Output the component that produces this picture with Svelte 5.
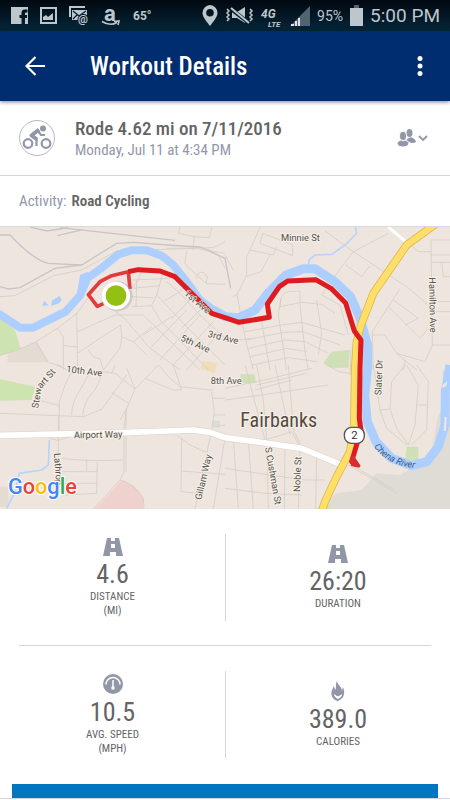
<script lang="ts">
  const stats = [
    [
      { icon: 'road', value: '4.6', label: 'DISTANCE', unit: '(MI)' },
      { icon: 'road', value: '26:20', label: 'DURATION', unit: '' },
    ],
    [
      { icon: 'gauge', value: '10.5', label: 'AVG. SPEED', unit: '(MPH)' },
      { icon: 'flame', value: '389.0', label: 'CALORIES', unit: '' },
    ],
  ];

  // map streets, split by the quarter of the map they are in
  const streetsNW = [
    'M0 215L45 212L160 152L245 135L350 78L585 70L675 85', 'M500 70L640 68L675 50', 'M620 70L655 90L675 130',
    'M540 5L536 25L582 35L580 76', 'M582 35L628 38L636 8', 'M560 77L554 115L595 155L620 176L675 178',
    'M588 160Q600 125 622 155L618 175', 'M0 390Q50 380 108 350L172 310L230 266L300 170',
    'M108 350L145 412L185 424', 'M172 310L190 335L190 435', 'M190 362L232 366', 'M230 266L233 430',
    'M233 320L345 270L430 270', 'M233 384L300 340L362 300', 'M264 374L280 395L300 402L310 435',
    'M345 258L375 282L450 370L540 435', 'M362 300L365 335L400 350L440 390', 'M365 335L360 370L310 435',
    'M395 190L412 170L425 140', 'M395 215L460 218', 'M395 190L480 182', 'M395 165L510 160', 'M395 245L455 242L470 210L490 140',
    'M410 165L408 245', 'M455 242L480 285L625 435', 'M430 270L600 435', 'M470 210L555 300L675 420',
    'M490 230L540 200L560 175', 'M515 280L590 205', 'M545 310L620 235', 'M430 330L515 275', 'M450 370L560 255',
    'M400 350L455 305', 'M480 405L600 270', 'M515 425L640 290', 'M560 435L660 320', 'M500 170L540 205L600 270L675 340',
  ];
  const streetsNE = [
    'M108 0L75 75L65 95', 'M113 25L105 55L203 92L203 60L113 25', 'M75 75L145 90L155 65', 'M65 95L65 150L36 210L62 345L85 435',
    'M65 155L108 140L135 90', 'M0 90L25 135', 'M25 215L40 205', 'M300 18L385 80L350 125L290 210',
    'M385 80L545 185L610 240', 'M385 80L490 25', 'M360 118L410 155L435 122', 'M545 50L580 80L618 80',
    'M618 45L675 45M618 45L622 360L675 360M618 90L675 90M618 112L675 112M650 112L655 155L675 155M625 230L675 230M625 260L675 260',
    'M525 190L490 245L442 320L445 435', 'M490 245L585 340L610 310', 'M505 225L580 280L540 300', 'M442 330L480 330L515 385L575 435',
    'M515 385L600 410L622 360', 'M535 435L540 405', 'M165 245Q165 205 190 200L225 198L225 240M168 220L160 270L185 435',
    'M165 245L230 232L290 238L330 265', 'M290 210L345 240L370 330', 'M275 225L290 325L280 390', 'M225 240L240 380L250 435',
    'M60 320L170 300L230 292L360 330', 'M65 345L175 322L235 320L345 360', 'M70 370L180 345L240 350L310 385',
    'M75 395L185 370L245 380', 'M80 420L190 398L275 410', 'M110 290L135 435', 'M378 375L376 435', 'M0 350L80 340',
  ];
  const streetsSW = [
    'M0 145L250 155L305 133L380 30', 'M170 0L215 20L195 60L178 110L177 195', 'M178 122L115 105', 'M215 150Q215 110 240 75L265 30',
    'M248 152Q250 110 285 75L310 20', 'M310 20L345 25L405 72L380 130L372 190L372 320L360 345L280 432',
    'M345 0L335 25', 'M335 82L385 115', 'M380 10L405 72L475 0', 'M475 0L510 40L540 65L640 76', 'M435 40L520 75L545 74L535 45L520 0',
    'M635 80L643 140L635 195L585 432', 'M360 165L380 130', 'M378 320L378 140', 'M148 220L175 226L210 215', 'M175 155L175 280',
    'M185 280Q260 290 370 285', 'M260 285L260 318', 'M292 290L290 385L195 390', 'M185 320L292 320', 'M185 355L292 355',
    'M530 210L570 240L618 262', 'M545 220L543 380L600 385', 'M543 318L675 328', 'M675 220L640 432', 'M640 100L675 100', 'M643 150L675 150M643 185L675 180',
    'M360 345Q400 355 430 400L432 432',
  ];
  const streetsSE = [
    'M60 0L120 225', 'M95 0L115 105L125 225', 'M150 0L195 210', 'M190 0L205 195L225 235L220 432', 'M0 70L140 40L260 10',
    'M0 105L110 90L310 60', 'M90 75L200 45', 'M120 225L200 200L225 245', 'M95 60L245 25', 'M125 225L130 432M180 235L178 432M275 255L272 432',
    'M70 225L85 432M25 220L40 432', 'M0 310L100 325L240 345L300 345', 'M0 370L120 385L230 390', 'M370 300L515 385M380 300L510 375',
    'M445 0L465 135L485 190L545 240', 'M465 135L495 132L515 190L550 240', 'M495 132L500 50L540 0', 'M575 0L610 50L605 195L560 240',
    'M545 0L580 60L575 120L605 120', 'M575 120L570 180L550 240', 'M310 0L340 20L375 25M376 0L376 30',
  ];
</script>

<div class="screen">
  <div class="status">
    <div class="notices">
      <svg width="17" height="17" viewBox="0 0 17 17"><path fill="#bcc6cb" fill-rule="evenodd" d="M0 0h17v17h-3v-6h2V8h-2V6.500q0-1 1-1h1.500V2.500h-3q-3 0-3 3.500v2H8.500v3h2v6H0z" /></svg>
      <svg width="17" height="17" viewBox="0 0 17 17"><path fill="#bcc6cb" fill-rule="evenodd" d="M0 0h17v17H0zM2 2v13h13V2zM3 13V10l3-2 2 2 5-4v7z" /></svg>
      <svg width="20" height="23" viewBox="0 0 20 23">
        <path fill="none" stroke="#bcc6cb" stroke-width="2" d="M1 13V3h15" />
        <path fill="#bcc6cb" d="M3 6h15v6l-5-1-4 5H3z" />
        <path fill="none" stroke="#062033" stroke-width="1.300" d="M4 7l6 5 7-5M4 15l4-4" />
        <text x="9" y="19" class="at">@</text>
      </svg>
      <svg width="20" height="31" viewBox="0 0 20 31">
        <text x="3" y="21" class="amazon">a</text>
        <path fill="none" stroke="#bcc6cb" stroke-width="1.600" d="M1 21.500q8 5 15 1M13 21.500l5-.5-1 4" />
      </svg>
      <span class="temp">65°</span>
    </div>
    <div class="system">
      <svg width="16" height="21" viewBox="0 0 16 21"><path fill="#bcc6cb" fill-rule="evenodd" d="M8 0a8 8 0 0 1 7.500 8C15.500 12 11 17 8 21 5 17 .5 12 .5 8A8 8 0 0 1 8 0zm0 4a3.800 3.800 0 1 0 0 7.600A3.800 3.800 0 0 0 8 4z" /></svg>
      <svg width="29" height="19" viewBox="0 0 29 19">
        <path fill="#bcc6cb" d="M7 6h5l8-5v16l-8-5H7z" />
        <path stroke="#071e2c" stroke-width="4" d="M6 3l18 14" />
        <path stroke="#bcc6cb" stroke-width="2" d="M6 2l18 15" />
        <path fill="none" stroke="#bcc6cb" stroke-width="1.500" d="M2 3l2 2-2 2 2 2-2 2 2 2-2 2M25 3l2 2-2 2 2 2-2 2 2 2-2 2" />
      </svg>
      <svg width="22" height="31" viewBox="0 0 22 31"><text x="0" y="18" class="net">4G</text><text x="7" y="27" class="lte">LTE</text></svg>
      <svg width="20" height="20" viewBox="0 0 20 20"><path fill="#52646f" d="M20 0v20H0z" /><path fill="#dce2e5" d="M1 18h3v2H1zM5 15h2v5H5zM8 12h2v8H8z" /></svg>
      <span class="percent">95%</span>
      <svg width="13" height="21" viewBox="0 0 13 21"><path fill="#52646f" d="M4 0h5v3H4z" /><path fill="#bcc6cb" d="M0 3h13v18H0z" /></svg>
      <span class="clock">5:00 PM</span>
    </div>
  </div>

  <header>
    <button class="back" aria-label="Back">
      <svg width="20" height="20" viewBox="0 0 20 20"><path fill="none" stroke="#fff" stroke-width="2.200" d="M20 10H2M10.500 1L1.500 10l9 9" /></svg>
    </button>
    <h1>Workout Details</h1>
    <button class="more" aria-label="More options">
      <svg width="6" height="20" viewBox="0 0 6 20"><g fill="#fff"><circle cx="3" cy="2.500" r="2.500" /><circle cx="3" cy="10" r="2.500" /><circle cx="3" cy="17.500" r="2.500" /></g></svg>
    </button>
  </header>

  <section class="summary">
    <svg width="38" height="38" viewBox="0 0 38 38">
      <circle cx="19" cy="19" r="17.500" fill="#fff" stroke="#b6b9c6" />
      <g fill="none" stroke="#9297a8">
        <circle cx="10" cy="24.500" r="4.300" stroke-width="2.200" />
        <circle cx="28" cy="24.500" r="4.300" stroke-width="2.200" />
        <path stroke-width="4" stroke-linejoin="round" d="M21 10.500l-7.500 6 5.500 4" />
        <path stroke-width="2.200" d="M18.500 19v8M20 12l3 4h4" />
      </g>
      <circle cx="25" cy="9.500" r="3" fill="#9297a8" />
    </svg>
    <div class="info">
      <h2>Rode 4.62 mi on 7/11/2016</h2>
      <p>Monday, Jul 11 at 4:34 PM</p>
    </div>
    <button class="privacy" aria-label="Privacy">
      <svg width="31" height="18" viewBox="0 0 31 18">
        <g fill="#9297a8">
          <ellipse cx="12.500" cy="4" rx="3" ry="4" />
          <path d="M9 11q4-4 7-2 3 2 3 4-4 2-7 0z" />
          <g stroke="#fff" stroke-width=".8"><ellipse cx="6" cy="7" rx="3.500" ry="4.500" /><path d="M0 15q0-3 4-4l2 1 2-1q4 1 4 4-2 3-6 3t-6-3z" /></g>
        </g>
        <path fill="none" stroke="#9297a8" stroke-width="1.800" d="M22 7l4 4 4-4" />
      </svg>
    </button>
  </section>

  <section class="activity"><span>Activity:</span> <b>Road Cycling</b></section>

  <svg class="map" viewBox="0 6 1350 846" role="img" aria-label="Route map">
    <rect width="1350" height="860" fill="#eee6de" />
    <path fill="#dfdbd5" d="M1350 520L1315 570L1290 700L1200 750L1130 745L1085 795L1010 805L950 852H1350z" />
    <path fill="#e4dcd3" d="M25 385L110 350L145 412H22zM0 785h25v60H0z" />
    <path fill="#cde3b0" d="M0 277L45 315L62 372L0 392zM0 462L105 485L95 525L0 527z" />
    <path fill="#cfdfb6" d="M995 380L1050 375L1045 428H990L970 415zM722 448h42l3 26h-45zM1220 665h35v42h-40z" />
    <path fill="#f0deba" d="M607 408L652 414L645 445L602 433z" />
    <path fill="#dcdcda" d="M638 587h22v20h-22z" />
    <path fill="#efd1ce" d="M285 852L365 765Q405 775 430 818V852z" />

    <g fill="none" stroke="#d5cec7" stroke-width="2.500">
      {#each streetsNW as d}<path {d} />{/each}
      <g transform="translate(675 0)">{#each streetsNE as d}<path {d} />{/each}</g>
      <g transform="translate(0 420)">{#each streetsSW as d}<path {d} />{/each}</g>
      <g transform="translate(675 420)">{#each streetsSE as d}<path {d} />{/each}</g>
      <g stroke="#c8c5c5" stroke-width="4">
        <path d="M0 30L30 30Q100 105 145 115L245 120L350 55L400 52L500 60L600 66L675 100L692 190" />
        <path d="M0 185L25 192L60 188L165 130L245 120M90 6L140 18L180 12L205 8M180 8L525 46M172 32L250 14" />
      </g>
      <path stroke="#b9d3fb" stroke-width="5" d="M925 125L927 105L945 90L995 88L1035 60L1070 25L1065 0M148 645L145 720L125 735L58 745L45 800L20 850" />
    </g>

    <g fill="none" stroke="#adcfff" stroke-linejoin="round">
      <path stroke-width="24" d="M-5 265L60 308H100L197 260L240 212L262 160L310 125L355 88L395 76H440L485 92L520 120L560 170L600 225L640 255L675 275" />
      <path stroke-width="27" d="M640 255L675 275L717 278L765 255L802 207L858 150L910 131H945L1005 170L1052 215L1080 280L1103 360V430L1094 510L1102 590L1128 650L1175 700L1235 722L1280 710L1315 665L1335 600L1336 500L1350 420" />
      <path fill="#adcfff" stroke="none" d="M127 243L133 227L145 241zM153 243L156 226L178 213L185 224L177 235zM1330 440h20v50h-20zM240 150L262 140L270 170L245 215L230 213z" />
    </g>
    <path fill="#eee6de" d="M1327 480l15-12-3 15-10 6zM1334 575l6 2-2 42-7-2z" />

    <g fill="none" stroke-linejoin="round">
      <path stroke="#dfd7cf" stroke-width="21" d="M-5 631L370 623L580 615L630 622L675 638L775 651L905 670L1030 722" />
      <path stroke="#fff" stroke-width="17" d="M-5 631L370 623L580 615L630 622L675 638L775 651L905 670L1030 722L1008 755M1050 690L1022 722" />
      <path stroke="#fff" stroke-width="9" d="M1165 6L1220 52" />
      <path stroke="#dfb84b" stroke-width="24" d="M1310 -5L1220 60L1120 205L1083 300L1070 350L1065 430L1062 600L1050 680L1010 755L975 830L965 860" />
      <path stroke="#ffdf69" stroke-width="19" d="M1310 -5L1220 60L1120 205L1083 300L1070 350L1065 430L1062 600L1050 680L1010 755L975 830L965 860" />
      <path stroke="#df3c40" stroke-width="11" d="M310 236L292 244L265 209L300 170L335 152L385 140L390 192" />
      <path stroke="#de1c20" stroke-width="15" d="M385 140L415 134L480 138L525 155L560 190L635 265L675 278L717 292L808 277L802 237L838 185L863 168L947 164L993 190L1037 234L1063 318L1083 345L1080 430L1078 580L1083 615L1055 710L1070 720" />
      <path fill="#d92d33" d="M1050 698L1060 690L1082 722L1078 728L1053 723z" />
    </g>

    <g class="label">
      <text x="843" y="48">Minnie St</text>
      <text class="on-route" transform="translate(551 208) rotate(40)">1st Ave</text>
      <text transform="translate(622 335) rotate(14)">3rd Ave</text>
      <text transform="translate(540 346) rotate(24)">5th Ave</text>
      <text transform="translate(198 441) rotate(7)">10th Ave</text>
      <text x="632" y="477">8th Ave</text>
      <text transform="translate(114 551) rotate(-80)">Stew</text>
      <text transform="translate(123 492) rotate(-48)">art St</text>
      <text transform="translate(222 640) rotate(-1)">Airport Way</text>
      <text transform="translate(162 685) rotate(86)">Lathrop</text>
      <text transform="translate(604 826) rotate(-77)">Gillam Way</text>
      <text transform="translate(795 668) rotate(80)">S Cushman St</text>
      <text transform="translate(900 801) rotate(-88)">Noble St</text>
      <text transform="translate(1144 511) rotate(-88)">Slater Dr</text>
      <text transform="translate(1287 157) rotate(89)">Hamilton Ave</text>
      <text class="town" x="721" y="605">Fairbanks</text>
      <path id="river-name" fill="none" stroke="none" d="M1121 665Q1170 728 1260 730" />
      <text class="river"><textPath href="#river-name">Chena River</textPath></text>
    </g>

    <rect x="1033" y="607" width="60" height="48" rx="22" fill="#fff" stroke="#555" stroke-width="4" />
    <text class="shield" x="1063" y="643">2</text>

    <circle cx="353" cy="214" r="45" fill="#aaa" opacity=".45" />
    <circle cx="348" cy="212" r="42" fill="#fff" />
    <circle cx="348" cy="212" r="31" fill="#94bf13" />

    <text class="google" x="24" y="807"><tspan fill="#4285f4">G</tspan><tspan fill="#ea4335">o</tspan><tspan fill="#fbbc05">o</tspan><tspan fill="#4285f4">g</tspan><tspan fill="#34a853">l</tspan><tspan fill="#ea4335">e</tspan></text>
  </svg>

  <main>
    {#each stats as row, i}
      {#if i > 0}<hr />{/if}
      <div class="row">
        {#each row as stat}
          <div class="stat">
            {#if stat.icon === 'road'}
              <svg width="20" height="18" viewBox="0 0 20 18"><path fill="#9297a8" fill-rule="evenodd" d="M4 0h4v3h4V0h4l4 18h-7v-4H7v4H0zM8 6v4h4V6z" /></svg>
            {:else if stat.icon === 'gauge'}
              <svg width="20" height="20" viewBox="0 0 20 20">
                <circle cx="10" cy="10" r="10" fill="#9297a8" />
                <path fill="none" stroke="#fff" stroke-width="1.500" d="M3 10.500a7 7 0 0 1 14 0" />
                <path stroke="#fff" stroke-width="1.500" d="M10 6v8" />
                <circle cx="10" cy="14" r="1.800" fill="#fff" />
              </svg>
            {:else}
              <svg width="14" height="20" viewBox="0 0 14 20">
                <path fill="#9297a8" d="M6 0c0 4 5 5 5 10l1-4c3 7 0 12-5 14-5-1-8-6-6-11l2-4 1 4c2-3 0-6 2-9z" />
                <path fill="#fff" d="M3 13q2 2 4 1 2 1 4-1 0 3-4 5-4-2-4-5z" />
                <circle cx="7" cy="13" r="2.200" fill="#9297a8" />
              </svg>
            {/if}
            <strong>{stat.value}</strong>
            <span>{stat.label}</span>
            {#if stat.unit}<span>{stat.unit}</span>{/if}
          </div>
        {/each}
      </div>
    {/each}
  </main>

  <div class="action"><button aria-label="Continue"></button></div>
</div>

<style>
  :global(body) {
    margin: 0;
    background: #fff;
  }

  .screen {
    font-family: "Roboto Condensed", "Liberation Sans Narrow", Roboto, sans-serif;
    color: #646464;
  }

  svg {
    display: block;
    flex: none;
  }

  button {
    padding: 0;
    border: 0;
    background: none;
    cursor: pointer;
  }

  h1, h2, p {
    margin: 0;
  }

  .status {
    display: flex;
    justify-content: space-between;
    height: 31px;
    padding: 0 10px 0 11px;
    background: linear-gradient(#010810, #04263a);
    color: #bcc6cb;
    font-family: Roboto, sans-serif;
  }

  .notices, .system {
    display: flex;
    align-items: center;
  }

  .notices {
    gap: 12px;
  }

  .system {
    gap: 7px;
  }

  .temp {
    font-size: 12px;
    font-weight: 700;
  }

  .percent {
    font-size: 14px;
  }

  .clock {
    font-size: 19px;
  }

  .at {
    font: 700 11px Roboto, sans-serif;
    fill: #bcc6cb;
    stroke: #062033;
    stroke-width: 2px;
    paint-order: stroke;
  }

  .amazon {
    font: 700 22px Roboto, sans-serif;
    fill: #bcc6cb;
  }

  .net, .lte {
    font: italic 700 12px Roboto, sans-serif;
    fill: #bcc6cb;
  }

  .lte {
    font-size: 8px;
  }

  header {
    position: relative;
    display: flex;
    align-items: center;
    height: 70px;
    padding: 0 27px 0 25px;
    background: #002c70;
    box-shadow: 0 1px 4px rgba(0, 0, 0, 0.5);
    color: #fff;
  }

  h1 {
    flex: 1;
    margin-left: 45px;
    font-size: 25px;
    font-weight: 500;
  }

  .summary {
    display: flex;
    align-items: center;
    height: 74px;
    padding: 0 22px 0 18px;
    border-bottom: 1px solid #d3d4de;
  }

  .info {
    flex: 1;
    margin-left: 19px;
  }

  h2 {
    font-size: 19px;
    font-weight: 500;
    line-height: 23px;
  }

  p {
    color: #9297a8;
    font-size: 15px;
    line-height: 20px;
  }

  .activity {
    display: flex;
    align-items: center;
    gap: 5px;
    height: 50px;
    padding: 0 19px;
    border-bottom: 1px solid #d9dade;
    font-size: 15px;
  }

  .activity span {
    color: #9297a8;
  }

  .activity b {
    font-weight: 600;
  }

  .map {
    width: 100%;
    height: auto;
  }

  .label {
    font-family: Roboto, sans-serif;
    font-size: 28px;
    fill: #555048;
    stroke: #f5f0ea;
    stroke-width: 6px;
    paint-order: stroke;
  }

  .on-route {
    stroke-width: 3px;
  }

  .town {
    font-family: "Roboto Condensed", Roboto, sans-serif;
    font-size: 60px;
    fill: #554a3e;
  }

  .river {
    font-style: italic;
    fill: #3c5d86;
    stroke: #adcfff;
    stroke-width: 2px;
  }

  .shield {
    font: 34px Roboto, sans-serif;
    fill: #333;
    text-anchor: middle;
  }

  .google {
    font: 500 65px Roboto, sans-serif;
    stroke: #fff;
    stroke-width: 6px;
    paint-order: stroke;
  }

  main {
    padding-bottom: 2px;
  }

  hr {
    height: 1px;
    margin: 0 19px;
    border: 0;
    background: #d3d4de;
  }

  .row {
    display: grid;
    grid-template-columns: 1fr 1fr;
    padding: 25px 0 24px;
  }

  .stat {
    display: flex;
    flex-direction: column;
    align-items: center;
    justify-content: center;
    height: 87px;
    font-size: 11px;
    line-height: 14px;
  }

  .stat + .stat {
    border-left: 1px solid #d3d4de;
  }

  strong {
    margin: 5px 0 3px;
    font-size: 26px;
    font-weight: 400;
    line-height: 26px;
  }

  .action {
    padding: 0 12px;
    border-bottom: 1px solid #d3d4de;
  }

  .action button {
    display: block;
    width: 100%;
    height: 14px;
    background: #0076c0;
  }
</style>
